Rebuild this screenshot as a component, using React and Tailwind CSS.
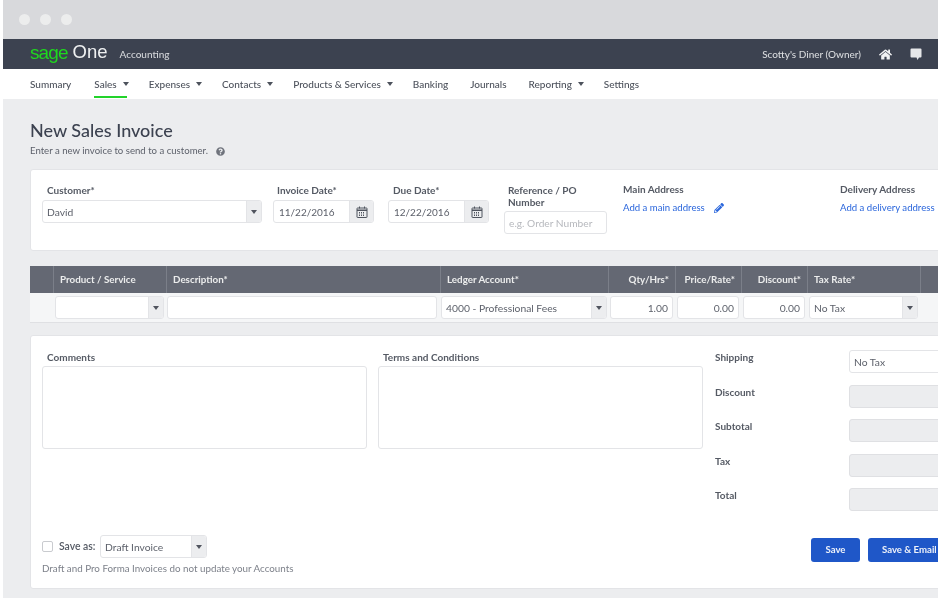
import { FaHome, FaPencilAlt, FaQuestionCircle } from 'react-icons/fa'

const navItems = [
  { label: 'Summary' },
  { label: 'Sales', caret: true, active: true },
  { label: 'Expenses', caret: true },
  { label: 'Contacts', caret: true },
  { label: 'Products & Services', caret: true },
  { label: 'Banking' },
  { label: 'Journals' },
  { label: 'Reporting', caret: true },
  { label: 'Settings' },
]

const Caret = ({ className = '' }) => (
  <svg className={className} width="6" height="4" viewBox="0 0 6 4" fill="currentColor">
    <path d="M0 0h6L3 4z" />
  </svg>
)

const CalendarIcon = () => (
  <svg width="12" height="12" viewBox="0 0 12 12" fill="none" stroke="#4f545e" strokeWidth="1">
    <rect x="1" y="2" width="10" height="9.5" rx="0.5" />
    <path d="M1 4.2h10" strokeWidth="1.6" />
    <path d="M3.5 0.5v2M8.5 0.5v2" />
    <path d="M3 6.5h6M3 8h6M3 9.5h6" strokeDasharray="1 1" />
  </svg>
)

const Select = ({ value = '', className = '' }) => (
  <div className={`flex h-[23px] overflow-hidden rounded-[3px] border border-[#e3e4e7] bg-white ${className}`}>
    <div className="flex-1 pl-[4px] text-[10.3px] leading-[22px] text-[#5d616b]">{value}</div>
    <div className="flex w-[15px] items-center justify-center border-l border-[#e3e4e7] bg-[#ecedef] text-[#50545e]">
      <Caret />
    </div>
  </div>
)

const DateField = ({ value }) => (
  <div className="flex h-[23px] w-[101px] overflow-hidden rounded-[3px] border border-[#e3e4e7] bg-white">
    <div className="flex-1 pl-[5px] text-[10px] leading-[22px] text-[#5d616b]">{value}</div>
    <div className="flex w-[24px] items-center justify-center border-l border-[#e3e4e7] bg-[#ecedef]">
      <CalendarIcon />
    </div>
  </div>
)

const Label = ({ children, className = '' }) => (
  <div className={`text-[10px] font-bold leading-[12px] text-[#555a64] ${className}`}>{children}</div>
)

const NumberCell = ({ value }) => (
  <div className="h-[23px] rounded-[3px] border border-[#e3e4e7] bg-white pr-[4px] text-right text-[10.3px] leading-[22px] text-[#5d616b]">
    {value}
  </div>
)

const HeadCell = ({ children, className = '' }) => (
  <div className={`flex items-center border-l border-[#7b7f89] text-[9.8px] font-bold text-[#eceded] ${className}`}>
    {children}
  </div>
)

const totals = ['Discount', 'Subtotal', 'Tax', 'Total']

export default function App() {
  return (
    <div className="h-[598px] w-[940px] overflow-hidden bg-white pl-[3px] font-['Lato',sans-serif] blur-[0.4px]">
      <div className="h-[598px] w-[935px] overflow-hidden bg-[#ecedef]">
        {/* window chrome */}
        <div className="flex h-[39px] items-center gap-[10px] bg-[#d8d9dc] pb-[1px] pl-[16px]">
          <span className="h-[11px] w-[11px] rounded-full bg-[#eceded]" />
          <span className="h-[11px] w-[11px] rounded-full bg-[#eceded]" />
          <span className="h-[11px] w-[11px] rounded-full bg-[#eceded]" />
        </div>

        {/* top bar */}
        <div className="flex h-[30px] items-center bg-[#3c4250] pl-[27px] pr-[16px]">
          <span className="pb-[4px] font-['Liberation_Sans',sans-serif] text-[19px] leading-none tracking-[-0.9px] text-[#1fd81f]">sage</span>
          <span className="ml-[5px] pb-[4px] font-['Liberation_Sans',sans-serif] text-[18.5px] leading-none text-[#eef0f1]">One</span>
          <span className="ml-[12px] text-[10px] font-medium text-[#d3d5d9]">Accounting</span>
          <span className="ml-auto text-[10px] font-medium text-[#d8dadd]">Scotty's Diner (Owner)</span>
          <FaHome className="ml-[18px] text-[#f1f2f3]" size={13} />
          <svg className="ml-[18px]" width="12" height="12" viewBox="0 0 12 12" fill="#e6e7e9">
            <path d="M1.5 0.5h9a1 1 0 0 1 1 1v7a1 1 0 0 1-1 1H9l-1.5 2.5-1-2.5H1.5a1 1 0 0 1-1-1v-7a1 1 0 0 1 1-1z" />
          </svg>
        </div>

        {/* nav */}
        <div className="h-[30px] bg-white pl-[27px]">
          <div className="flex h-[29px] gap-[22px]">
            {navItems.map((item, idx) => (
              <div
                key={item.label}
                className={`flex h-full items-center gap-[6px] border-b-2 pt-[3px] text-[10px] font-medium text-[#4d525c] ${
                  item.active ? 'border-[#22d32a]' : 'border-transparent'
                } ${idx === 0 ? 'mr-[1px]' : ''}`}
              >
                {item.label}
                {item.caret && <Caret className="-mr-[2px]" />}
              </div>
            ))}
          </div>
        </div>

        <div className="pl-[27px]">
          <h1 className="mt-[19px] text-[18px] font-medium leading-[24px] text-[#3c4250]">New Sales Invoice</h1>
          <div className="mt-[2px] flex h-[14px] items-center text-[9.6px] text-[#5d616b]">
            Enter a new invoice to send to a customer.
            <FaQuestionCircle className="ml-[8px] text-[#6f737c]" size={9} />
          </div>

          {/* invoice details */}
          <div className="mt-[11px] flex h-[82px] w-[960px] rounded-l-[3px] border border-[#e3e4e7] bg-white pl-[11px] pt-[14px]">
            <div className="w-[220px]">
              <Label className="mb-[4px] ml-[5px]">Customer*</Label>
              <Select value="David" />
            </div>
            <div className="ml-[11px]">
              <Label className="mb-[4px] ml-[4px]">Invoice Date*</Label>
              <DateField value="11/22/2016" />
            </div>
            <div className="ml-[14px]">
              <Label className="mb-[4px] ml-[5px]">Due Date*</Label>
              <DateField value="12/22/2016" />
            </div>
            <div className="ml-[15px] w-[103px]">
              <Label className="mb-[3px] ml-[4px]">Reference / PO<br />Number</Label>
              <div className="h-[23px] rounded-[3px] border border-[#e3e4e7] bg-white pl-[4px] text-[10.2px] leading-[22px] text-[#b6b8bd]">
                e.g. Order Number
              </div>
            </div>
            <div className="ml-[16px] w-[217px]">
              <Label className="-mt-[1px]">Main Address</Label>
              <div className="mt-[6px] flex items-center text-[9.6px] text-[#2a66dc]">
                Add a main address
                <FaPencilAlt className="ml-[9px]" size={10} />
              </div>
            </div>
            <div>
              <Label className="-mt-[1px]">Delivery Address</Label>
              <div className="mt-[6px] text-[9.6px] text-[#2a66dc]">Add a delivery address</div>
            </div>
          </div>

          {/* line items */}
          <div className="mt-[15px] w-[960px]">
            <div className="grid h-[27px] grid-cols-[23px_113px_274px_168px_67px_66px_66px_113px_1fr] bg-[#646873]">
              <div />
              <HeadCell className="pl-[6px]">Product / Service</HeadCell>
              <HeadCell className="pl-[6px]">Description*</HeadCell>
              <HeadCell className="pl-[6px]">Ledger Account*</HeadCell>
              <HeadCell className="justify-end pr-[6px]">Qty/Hrs*</HeadCell>
              <HeadCell className="justify-end pr-[6px]">Price/Rate*</HeadCell>
              <HeadCell className="justify-end pr-[6px]">Discount*</HeadCell>
              <HeadCell className="pl-[6px]">Tax Rate*</HeadCell>
              <HeadCell />
            </div>
            <div className="grid h-[30px] grid-cols-[23px_113px_274px_168px_67px_66px_66px_113px_1fr] border-b border-[#dfe0e3] bg-[#f5f6f7] pt-[3px]">
              <div />
              <div className="px-[2px]"><Select /></div>
              <div className="pl-[1px] pr-[3px]">
                <div className="h-[23px] rounded-[3px] border border-[#e3e4e7] bg-white" />
              </div>
              <div className="px-[1px]"><Select value="4000 - Professional Fees" /></div>
              <div className="px-[2px]"><NumberCell value="1.00" /></div>
              <div className="px-[2px]"><NumberCell value="0.00" /></div>
              <div className="px-[2px]"><NumberCell value="0.00" /></div>
              <div className="px-[2px]"><Select value="No Tax" /></div>
            </div>
          </div>

          {/* comments and totals */}
          <div className="mt-[12px] flex h-[254px] w-[960px] rounded-l-[3px] border border-[#e3e4e7] bg-white pl-[11px]">
            <div className="flex w-[673px] flex-col pt-[15px]">
              <div className="flex gap-[11px]">
                <div className="w-[325px]">
                  <Label className="mb-[3px] ml-[5px]">Comments</Label>
                  <div className="h-[83px] rounded-[3px] border border-[#e3e4e7] bg-white" />
                </div>
                <div className="w-[325px]">
                  <Label className="mb-[3px] ml-[5px]">Terms and Conditions</Label>
                  <div className="h-[83px] rounded-[3px] border border-[#e3e4e7] bg-white" />
                </div>
              </div>
              <div className="mt-[86px] flex items-center">
                <span className="h-[11px] w-[11px] rounded-[2px] border border-[#c9cbcf] bg-white" />
                <span className="ml-[6px] w-[41px] text-[10.4px] font-semibold text-[#555a64]">Save as:</span>
                <Select value="Draft Invoice" className="w-[107px]" />
              </div>
              <div className="mt-[3px] text-[9.8px] text-[#7d818a]">Draft and Pro Forma Invoices do not update your Accounts</div>
            </div>
            <div className="flex flex-col pt-[15px]">
              <div className="flex h-[34.5px] w-[240px]">
                <Label className="w-[134px]">Shipping</Label>
                <div className="-mt-[1px] h-[23px] w-[100px] rounded-[3px] border border-[#e3e4e7] bg-white pl-[4px] text-[10.3px] leading-[22px] text-[#5d616b]">
                  No Tax
                </div>
              </div>
              {totals.map((name) => (
                <div key={name} className="flex h-[34.5px] w-[240px]">
                  <Label className="w-[134px]">{name}</Label>
                  <div className="-mt-[1px] h-[23px] w-[100px] rounded-[3px] border border-[#dfe0e3] bg-[#ecedef]" />
                </div>
              ))}
              <div className="mt-[14.5px] flex gap-[8px] pl-[96px]">
                <div className="flex h-[24px] w-[49px] items-center justify-center rounded-[3px] bg-[#1f57c8] text-[9.6px] font-bold text-[#eef2fa]">Save</div>
                <div className="flex h-[24px] w-[90px] items-center whitespace-nowrap rounded-[3px] bg-[#1f57c8] pl-[14px] text-[9.6px] font-bold text-[#eef2fa]">Save &amp; Email</div>
              </div>
            </div>
          </div>
        </div>
      </div>
    </div>
  )
}
